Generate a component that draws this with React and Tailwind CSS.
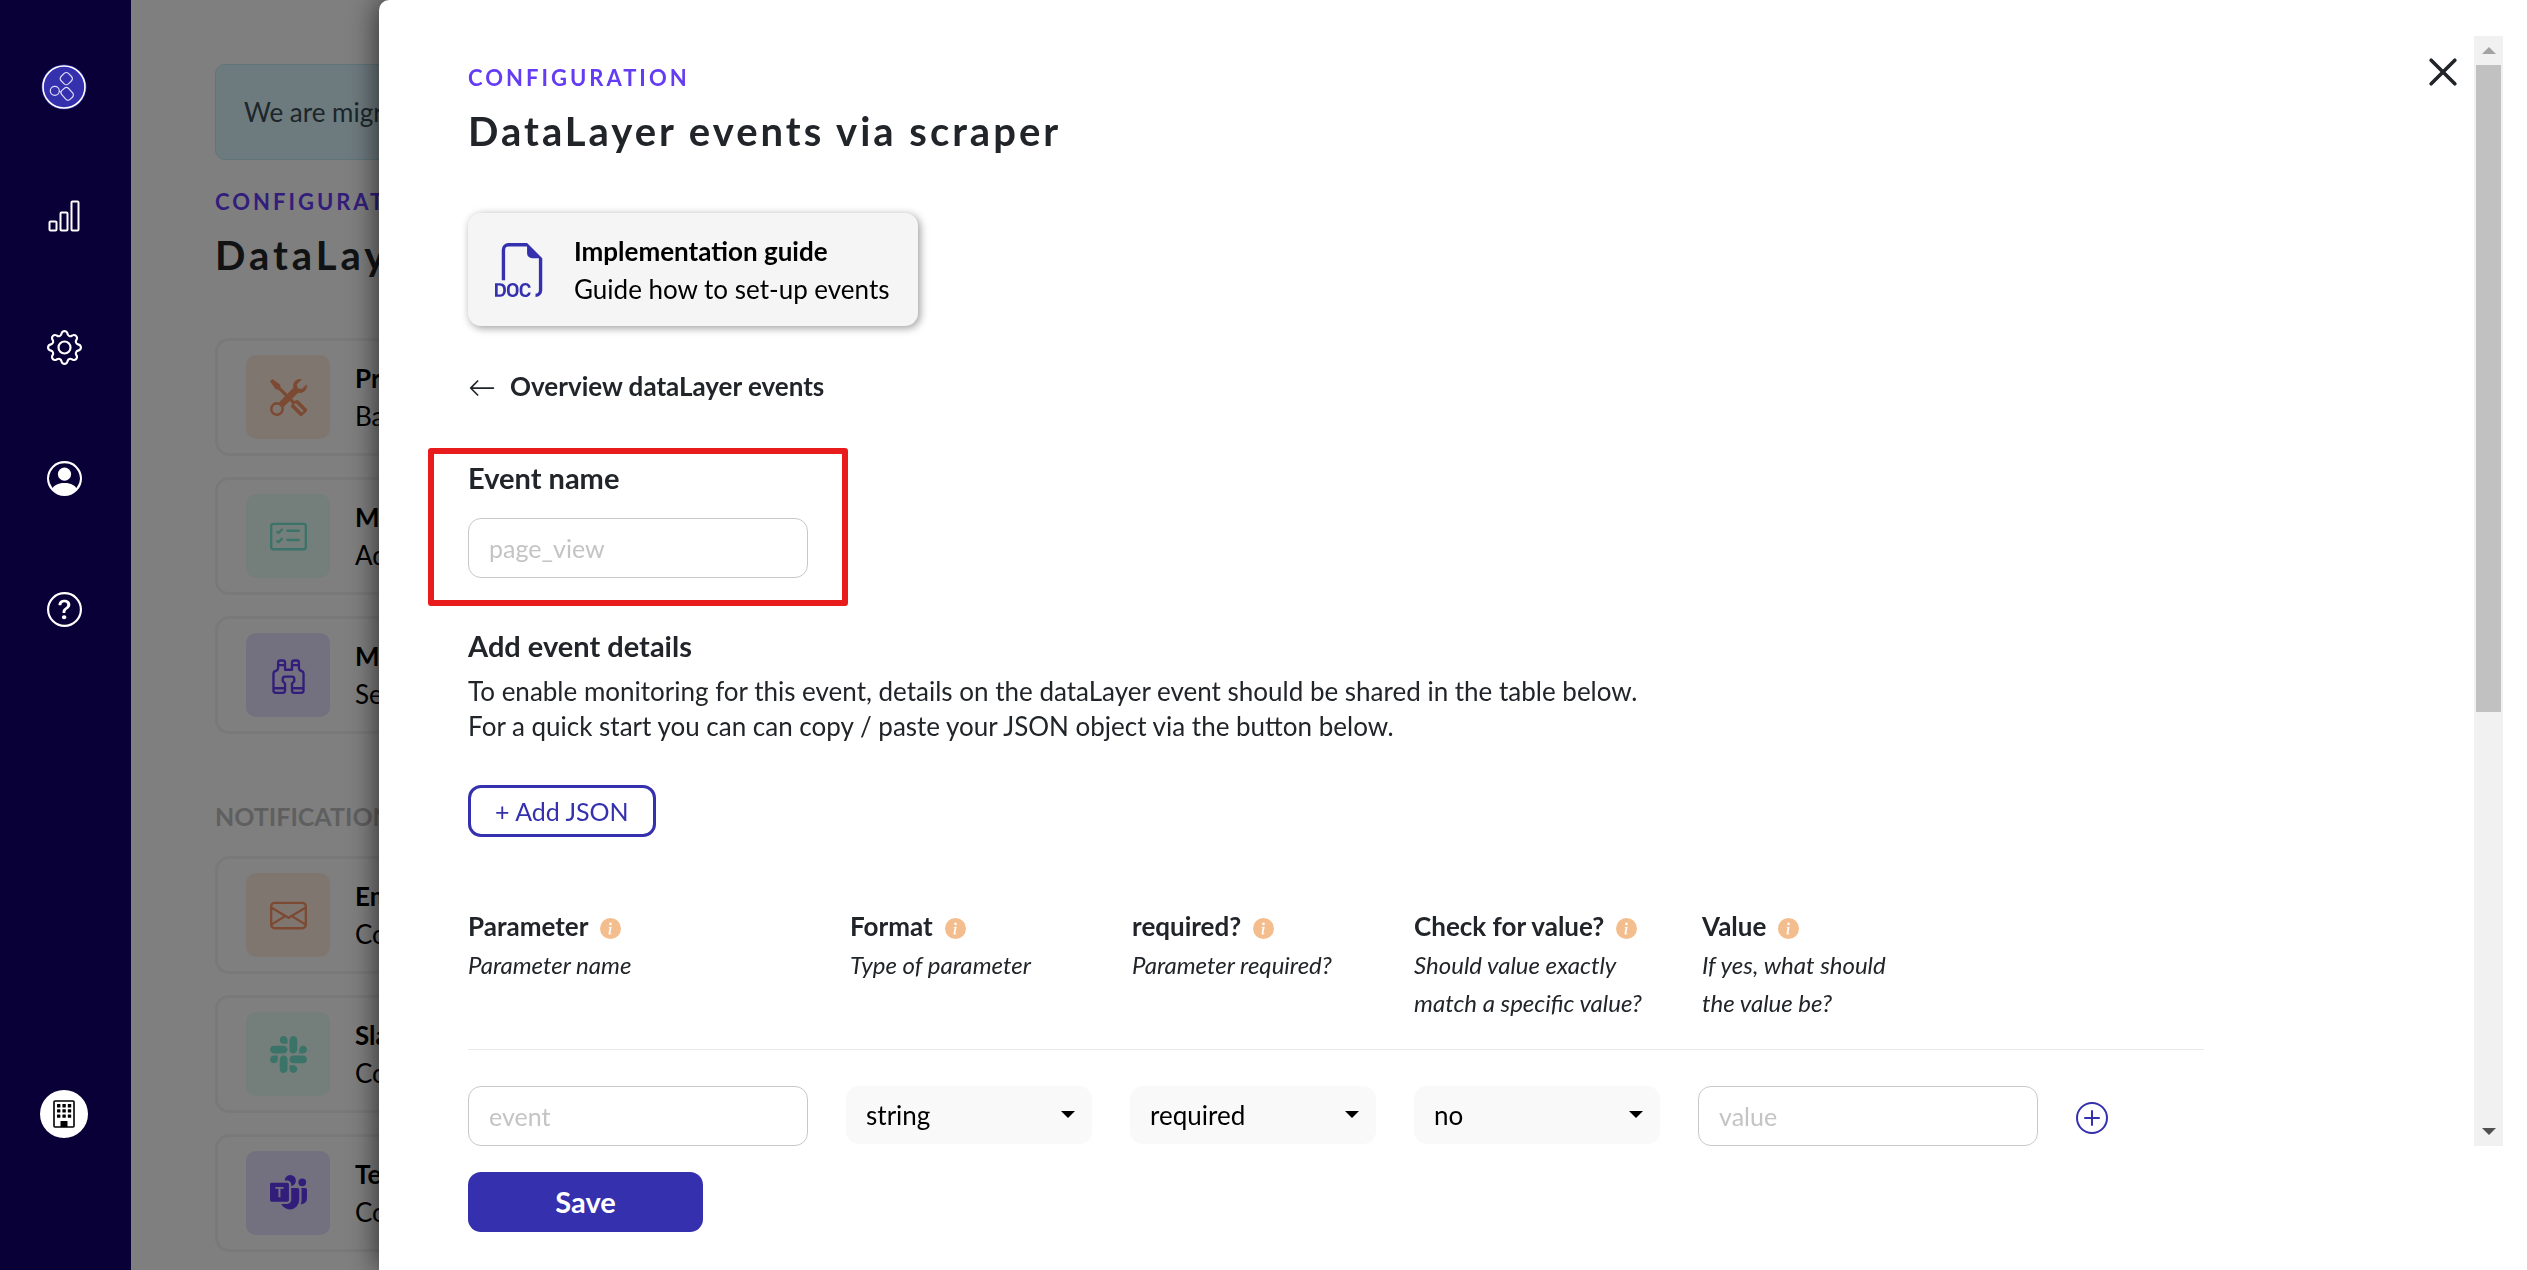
import React from "react";
import {
  BsGear,
  BsPersonCircle,
  BsQuestionCircle,
  BsTools,
  BsCardChecklist,
  BsBinoculars,
  BsEnvelope,
  BsSlack,
  BsMicrosoftTeams,
  BsPlusCircle,
  BsArrowLeft,
  BsFiletypeDoc,
  BsInfoCircleFill,
} from "react-icons/bs";

function Logo() {
  return (
    <svg viewBox="0 0 46 46" className="size-[46px]" fill="none" stroke="#fff">
      <circle cx="23" cy="23" r="22.5" fill="#3530ae" stroke="none" />
      <circle cx="23" cy="23" r="21" strokeWidth="1.6" />
      <g strokeWidth="1.2" stroke="#dcdcf6">
        <rect x="-5.2" y="-5.2" width="10.4" height="10.4" rx="3" transform="translate(25.3 14.6) rotate(45)" />
        <rect x="-4.6" y="-6" width="9.2" height="12" rx="3" transform="translate(26.2 29.8) rotate(-42)" />
        <circle cx="13.8" cy="26.8" r="4.5" />
        <path d="M18.2 27.2 L20.2 28.2" />
      </g>
    </svg>
  );
}

function Signal() {
  return (
    <svg viewBox="0 0 32 32" className="size-8" fill="none" stroke="#fff" strokeWidth="2">
      <rect x="1.5" y="21.5" width="7" height="9" rx="1" />
      <rect x="12.5" y="12.5" width="7" height="18" rx="1" />
      <rect x="23.5" y="1.5" width="7" height="29" rx="1" />
    </svg>
  );
}

function Building() {
  const steps = [0, 1, 2];
  return (
    <svg viewBox="0 0 22 28" className="h-7 w-[22px]" fill="#000">
      <rect x="1" y="1" width="20" height="26" rx="1" fill="none" stroke="#000" strokeWidth="1.6" />
      {steps.map((r) =>
        steps.map((c) => (
          <rect key={`${r}${c}`} x={4 + c * 5.4} y={4 + r * 5.2} width="3.4" height="3.4" rx="0.5" />
        ))
      )}
      <rect x="7.5" y="21" width="7" height="6" rx="0.5" />
    </svg>
  );
}

function Cross() {
  return (
    <svg viewBox="0 0 28 28" className="size-7" fill="none" stroke="currentColor" strokeWidth="3.6" strokeLinecap="round">
      <path d="M2.2 2.2L25.800 25.800M25.800 2.2L2.2 25.800" />
    </svg>
  );
}

const cards = [
  { title: "Property", text: "Basics", icon: BsTools, tone: "bg-[#ffece0] text-[#f99464]" },
  { title: "Monitors", text: "Add rule", icon: BsCardChecklist, tone: "bg-[#e8fcf4] text-[#76e6d0]" },
  { title: "Model", text: "Set up", icon: BsBinoculars, tone: "bg-[#e6e0ff] text-[#643cf4]" },
];

const channels = [
  { title: "Email", text: "Connect", icon: BsEnvelope, tone: "bg-[#ffece0] text-[#f99464]" },
  { title: "Slack", text: "Connect", icon: BsSlack, tone: "bg-[#e8fcf4] text-[#76e6d0]" },
  { title: "Teams", text: "Connect", icon: BsMicrosoftTeams, tone: "bg-[#e6e0ff] text-[#643cf4]" },
];

function Card({ title, text, icon: Icon, tone }) {
  return (
    <a href="#" className="flex items-center gap-[25px] rounded-[14px] border-3 border-[#f2f2f2] px-7 py-[14px] text-black">
      <span className={`flex size-[84px] shrink-0 items-center justify-center rounded-[10px] ${tone}`}>
        <Icon className="size-[37px]" />
      </span>
      <span className="text-[26px] leading-[38px] whitespace-nowrap">
        <b className="block font-bold">{title}</b>
        <span className="block">{text}</span>
      </span>
    </a>
  );
}

const columns = [
  { id: "parameter", title: "Parameter", note: ["Parameter name"], cell: "w-[378px]" },
  { id: "format", title: "Format", note: ["Type of parameter"], cell: "w-[284px] pl-1" },
  { id: "required", title: "required?", note: ["Parameter required?"], cell: "w-[284px] pl-0.5" },
  { id: "check", title: "Check for value?", note: ["Should value exactly", "match a specific value?"], cell: "w-[284px]" },
  { id: "value", title: "Value", note: ["If yes, what should", "the value be?"], cell: "w-[394px] pl-1" },
];

function TextBox(props) {
  return (
    <input
      type="text"
      className="block h-[60px] w-[340px] rounded-[13px] border border-[#c8c8c8] bg-white px-5 text-[25px] text-[#212529] placeholder:text-[#c4c4c4]"
      {...props}
    />
  );
}

function Select({ label, options }) {
  return (
    <div className="relative w-[246px]">
      <select
        aria-label={label}
        className="block h-[58px] w-full appearance-none rounded-[13px] bg-[#f9f9f9] px-5 text-[26px] text-black"
      >
        {options.map((o) => (
          <option key={o}>{o}</option>
        ))}
      </select>
      <svg viewBox="0 0 14 7" className="pointer-events-none absolute top-[25px] right-[17px] h-[7px] w-[14px]">
        <path d="M0 0H14L7 7Z" />
      </svg>
    </div>
  );
}

export default function App() {
  return (
    <div className="flex h-screen overflow-hidden bg-white font-['Lato','Liberation_Sans',sans-serif] text-[#212529]">
      <nav className="z-20 flex w-[131px] shrink-0 flex-col items-center bg-[#090037] pt-16 pr-[3px] text-white">
        <a href="#" aria-label="Home"><Logo /></a>
        <a href="#" aria-label="Statistics" className="mt-[90px]"><Signal /></a>
        <a href="#" aria-label="Settings" className="mt-[98px]"><BsGear className="size-[35px]" /></a>
        <a href="#" aria-label="Account" className="mt-24"><BsPersonCircle className="size-[35px]" /></a>
        <a href="#" aria-label="Help" className="mt-24"><BsQuestionCircle className="size-[35px]" /></a>
        <a href="#" aria-label="Organisation" className="mt-auto mb-[132px] flex size-12 items-center justify-center rounded-full bg-white">
          <Building />
        </a>
      </nav>

      <main className="min-w-0 flex-1 overflow-hidden px-[84px] pt-16">
        <p className="flex h-24 items-center rounded-[10px] border border-[#c0e8f2] bg-[#dbf4fc] px-7 text-[26px] whitespace-nowrap text-[#3a4c54]">
          We are migrating
        </p>
        <p className="mt-[25px] text-[22px] leading-[34px] font-bold tracking-[3px] text-[#643cf4]">CONFIGURATION</p>
        <h1 className="mt-3 text-[40px] leading-[48px] font-bold tracking-[4px]">DataLayer</h1>
        <div className="mt-[59px] flex flex-col gap-[21px]">
          {cards.map((c) => <Card key={c.title} {...c} />)}
        </div>
        <h2 className="mt-[65px] text-[25px] leading-[34px] font-bold text-[#bebebe]">NOTIFICATIONS</h2>
        <div className="mt-[23px] flex flex-col gap-[21px]">
          {channels.map((c) => <Card key={c.title} {...c} />)}
        </div>
      </main>

      <div className="fixed inset-0 z-10 flex justify-end bg-black/50">
        <section
          role="dialog"
          aria-label="DataLayer events via scraper"
          className="flex h-full w-[85%] flex-col rounded-tl-[10px] bg-white pt-9 pr-6 shadow-[0_0_30px_rgba(0,0,0,0.7)]"
        >
          <div className="flex min-h-0 flex-1">
            <div className="min-w-0 flex-1 overflow-hidden pl-[89px]">
              <header className="flex items-start justify-between pr-[17px]">
                <div className="pt-[25px]">
                  <p className="text-[22px] leading-[34px] font-bold tracking-[3px] text-[#643cf4]">CONFIGURATION</p>
                  <h2 className="mt-3 text-[40px] leading-[48px] font-bold tracking-[3px]">DataLayer events via scraper</h2>
                </div>
                <button type="button" aria-label="Close" className="mt-[22px]"><Cross /></button>
              </header>

              <button
                type="button"
                className="mt-[58px] flex h-[113px] items-center gap-[25px] rounded-[13px] bg-[#f5f5f5] pr-7 pl-[27px] text-left shadow-[2px_2px_8px_rgba(0,0,0,0.4)]"
              >
                <BsFiletypeDoc className="size-[54px] text-[#3530ae]" />
                <span className="text-[26px] leading-[38px] text-black">
                  <b className="block font-bold">Implementation guide</b>
                  <span className="block">Guide how to set-up events</span>
                </span>
              </button>

              <a href="#" className="mt-[41px] flex items-center gap-[14px] text-[26px] leading-[38px] font-bold">
                <BsArrowLeft className="mt-1 size-7" />
                Overview dataLayer events
              </a>

              <div className="relative mt-14 w-[340px]">
                <label htmlFor="event-name" className="mb-[23px] block text-[29px] leading-[34px] font-bold">Event name</label>
                <TextBox id="event-name" placeholder="page_view" />
                <div className="pointer-events-none absolute -inset-x-10 -top-[13px] -bottom-7 rounded-[3px] border-6 border-[#e81c1c]" />
              </div>

              <h3 className="mt-[51px] text-[29px] leading-[34px] font-bold">Add event details</h3>
              <p className="mt-[11px] text-[26px] leading-[35px]">
                To enable monitoring for this event, details on the dataLayer event should be shared in the table below.
                <br />
                For a quick start you can can copy / paste your JSON object via the button below.
              </p>
              <button type="button" className="mt-[41px] block h-[52px] rounded-[13px] border-3 border-[#3530ae] px-6 text-[25px] leading-[44px] text-[#3530ae]">
                + Add JSON
              </button>

              <table className="mt-[70px] w-full max-w-[1736px] table-fixed border-collapse text-left">
                <thead>
                  <tr className="border-b border-[#eaeaea] align-top">
                    {columns.map((c) => (
                      <th key={c.id} scope="col" className={`pb-[27px] font-normal ${c.cell}`}>
                        <span className="mb-px flex items-center gap-3 text-[26px] leading-[38px] font-bold">
                          {c.title}
                          <BsInfoCircleFill className="mt-1 size-[21px] shrink-0 text-[#f3bd8d]" />
                        </span>
                        {c.note.map((n) => (
                          <i key={n} className="block text-[24px] leading-[38px] whitespace-nowrap">{n}</i>
                        ))}
                      </th>
                    ))}
                    <td />
                  </tr>
                </thead>
                <tbody>
                  <tr className="align-top">
                    <td className="pt-9"><TextBox aria-label="Parameter" placeholder="event" /></td>
                    <td className="pt-9"><Select label="Format" options={["string", "number", "boolean"]} /></td>
                    <td className="pt-9"><Select label="Required" options={["required", "optional"]} /></td>
                    <td className="pt-9"><Select label="Check for value" options={["no", "yes"]} /></td>
                    <td className="pt-9">
                      <div className="flex items-center gap-[38px]">
                        <TextBox aria-label="Value" placeholder="value" />
                        <button type="button" aria-label="Add parameter" className="mt-1 shrink-0 text-[#3530ae]">
                          <BsPlusCircle className="size-8" />
                        </button>
                      </div>
                    </td>
                    <td />
                  </tr>
                </tbody>
              </table>
            </div>

            <div className="flex w-[29px] shrink-0 flex-col items-center bg-[#f1f1f1]">
              <button type="button" aria-label="Scroll up" className="flex h-[29px] w-full shrink-0 items-center justify-center">
                <svg viewBox="0 0 14 7" className="h-[7px] w-[14px]"><path d="M0 7H14L7 0Z" fill="#a3a3a3" /></svg>
              </button>
              <div className="w-full flex-1 px-0.5">
                <div className="h-8/13 bg-[#c1c1c1]" />
              </div>
              <button type="button" aria-label="Scroll down" className="flex h-[29px] w-full shrink-0 items-center justify-center">
                <svg viewBox="0 0 14 7" className="h-[7px] w-[14px]"><path d="M0 0H14L7 7Z" fill="#505050" /></svg>
              </button>
            </div>
          </div>

          <footer className="pt-[26px] pb-[38px] pl-[89px]">
            <button type="button" className="h-[60px] w-[235px] rounded-[13px] bg-[#3530ae] text-[29px] font-bold text-white">Save</button>
          </footer>
        </section>
      </div>
    </div>
  );
}
